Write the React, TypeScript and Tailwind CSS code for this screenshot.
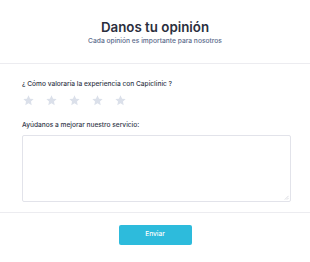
const Star = () => (
  <svg viewBox="0 0 24 24" className="h-[13px] w-[13px]" aria-hidden="true">
    <path
      d="M12 2.5l2.9 6.1 6.6.8-4.9 4.6 1.3 6.6L12 17.3l-5.9 3.3 1.3-6.6-4.9-4.6 6.6-.8z"
      fill="#dbe0ea"
    />
  </svg>
);

export default function App() {
  return (
    <div className="h-[262px] w-[310px] bg-white font-['Inter',sans-serif]">
      {/* Header */}
      <div className="flex h-[64px] flex-col items-center border-b border-[#ececf0] pt-[19px]">
        <h1 className="text-[13.3px] font-semibold leading-[16px] text-[#2b2f3e]">
          Danos tu opinión
        </h1>
        <p className="mt-[1px] text-[6.7px] font-medium leading-[10px] text-[#5b6b8c]">
          Cada opinión es importante para nosotros
        </p>
      </div>

      {/* Form */}
      <div className="px-[22px] pt-[15px] pb-[10px]">
        <p className="text-[6.6px] font-medium leading-[10px] text-[#33384a]">
          ¿ Cómo valoraría la experiencia con Capiclinic ?
        </p>
        <div className="mt-[5px] flex gap-[10px]">
          {Array.from({ length: 5 }).map((_, i) => (
            <Star key={i} />
          ))}
        </div>
        <p className="mt-[13px] text-[6.6px] font-medium leading-[10px] text-[#33384a]">
          Ayúdanos a mejorar nuestro servicio:
        </p>
        <div className="relative mt-[5px] h-[67px] w-[269px]">
          <textarea className="block h-full w-full resize-none rounded-[2px] border border-[#e2e3ea] bg-white" />
          <svg
            viewBox="0 0 6 6"
            className="pointer-events-none absolute right-[2px] bottom-[2px] h-[5px] w-[5px]"
            aria-hidden="true"
          >
            <path d="M5.5 1L1 5.5M5.5 3.5L3.5 5.5" stroke="#c8cad2" strokeWidth="0.8" />
          </svg>
        </div>
      </div>

      {/* Footer */}
      <div className="flex justify-center border-t border-[#ececf0] pt-[12px]">
        <button className="h-[20px] w-[73px] rounded-[2px] bg-[#2dbbdc] text-[6.6px] font-medium text-white">
          Enviar
        </button>
      </div>
    </div>
  );
}
